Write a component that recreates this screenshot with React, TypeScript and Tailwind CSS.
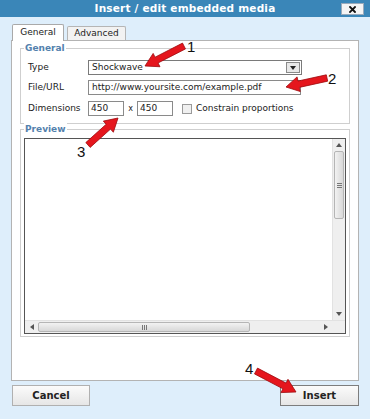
import React from 'react';

type Pt = [number, number];

// builds a fat arrow polygon from tail to tip
const arrowPoints = (tail: Pt, tip: Pt, shaft = 6.5, head = 15, headLen = 13) => {
  const dx = tip[0] - tail[0];
  const dy = tip[1] - tail[1];
  const len = Math.hypot(dx, dy);
  const ux = dx / len;
  const uy = dy / len;
  const nx = -uy;
  const ny = ux;
  const bx = tip[0] - ux * headLen;
  const by = tip[1] - uy * headLen;
  const pts: Pt[] = [
    [tail[0] + (nx * shaft) / 2, tail[1] + (ny * shaft) / 2],
    [bx + (nx * shaft) / 2, by + (ny * shaft) / 2],
    [bx + (nx * head) / 2, by + (ny * head) / 2],
    tip,
    [bx - (nx * head) / 2, by - (ny * head) / 2],
    [bx - (nx * shaft) / 2, by - (ny * shaft) / 2],
    [tail[0] - (nx * shaft) / 2, tail[1] - (ny * shaft) / 2],
  ];
  return pts.map((p) => p.join(',')).join(' ');
};

const arrows: { tail: Pt; tip: Pt; label: string; lx: number; ly: number }[] = [
  { tail: [184, 46], tip: [145, 66], label: '1', lx: 187, ly: 52 },
  { tail: [327, 78], tip: [286, 87], label: '2', lx: 328, ly: 84 },
  { tail: [88, 145], tip: [118, 118], label: '3', lx: 77, ly: 157 },
  { tail: [256, 371], tip: [296, 392], label: '4', lx: 245, ly: 374 },
];

const Legend = ({ text }: { text: string }) => (
  <span className="absolute -top-[7px] left-[3px] bg-white px-[1px] text-[9px] leading-[12px] font-bold text-[#5381ad]">
    {text}
  </span>
);

const App: React.FC = () => {
  return (
    <div
      className="relative w-[370px] h-[419px] bg-[#deeefb] flex flex-col overflow-hidden text-[#222]"
      style={{ fontFamily: '"DejaVu Sans", Verdana, sans-serif' }}
    >
      {/* Title bar */}
      <div className="relative h-[17px] bg-[#3a86b8] flex items-center justify-center">
        <span className="text-white font-bold text-[10.5px] leading-none tracking-[0.2px]">
          Insert / edit embedded media
        </span>
        <div className="absolute right-[6px] top-[3px] w-[23px] h-[12px] bg-[#f4f4f4] border border-[#9ab] flex items-center justify-center">
          <svg width="7" height="7" viewBox="0 0 7 7">
            <path d="M1 1 L6 6 M6 1 L1 6" stroke="#111" strokeWidth="1.8" strokeLinecap="square" />
          </svg>
        </div>
      </div>

      {/* Tabs */}
      <div className="flex items-end gap-[3px] pl-[12px] mt-[7px] h-[16px]">
        <div className="w-[52px] h-[17px] bg-white border border-b-0 border-[#a9a9a9] rounded-t-[2px] flex items-center justify-center text-[9px] relative top-[1px]">
          General
        </div>
        <div className="w-[59px] h-[14px] bg-[#f2f2f2] border border-b-0 border-[#b5b5b5] rounded-t-[2px] flex items-center justify-center text-[9px]">
          Advanced
        </div>
      </div>

      {/* Panel */}
      <div className="ml-[11px] w-[348px] h-[341px] bg-white border border-[#b3b3b3] px-[8px] pt-[7px] flex flex-col">
        {/* General fieldset */}
        <div className="relative h-[76px] border border-[#cfcfcf] pl-[7px] pt-[11px] flex flex-col gap-[5px] text-[9px]">
          <Legend text="General" />
          <div className="flex items-center h-[15px]">
            <span className="w-[60px]">Type</span>
            <div className="w-[214px] h-[15px] border border-[#7a7a7a] flex items-center pl-[3px] pr-[1px]">
              <span className="flex-1">Shockwave</span>
              <div className="w-[14px] h-[11px] border border-[#8a8a8a] bg-[#e8e8e8] flex items-center justify-center">
                <svg width="6" height="4" viewBox="0 0 6 4">
                  <polygon points="0,0 6,0 3,4" fill="#222" />
                </svg>
              </div>
            </div>
          </div>
          <div className="flex items-center h-[15px]">
            <span className="w-[60px]">File/URL</span>
            <div className="w-[213px] h-[15px] border border-[#8a8a8a] flex items-center pl-[3px]">
              http://www.yoursite.com/example.pdf
            </div>
          </div>
          <div className="flex items-center h-[15px] mt-[1px]">
            <span className="w-[60px]">Dimensions</span>
            <div className="w-[36px] h-[15px] border border-[#8a8a8a] flex items-center pl-[2px]">450</div>
            <span className="w-[13px] text-center text-[8px]">x</span>
            <div className="w-[36px] h-[15px] border border-[#8a8a8a] flex items-center pl-[2px]">450</div>
            <div className="ml-[9px] w-[10px] h-[10px] border border-[#9a9a9a] bg-[#f0f0f0]" />
            <span className="ml-[4px]">Constrain proportions</span>
          </div>
        </div>

        {/* Preview fieldset */}
        <div className="relative mt-[5px] h-[208px] border border-[#cfcfcf] px-[3px] pt-[8px]">
          <Legend text="Preview" />
          <div className="w-[322px] h-[196px] border border-[#555] bg-white flex flex-col">
            <div className="flex-1 flex">
              <div className="flex-1" />
              <div className="w-[13px] bg-[#efefef] flex flex-col border-l border-[#e2e2e2]">
                <div className="h-[12px] flex items-center justify-center">
                  <svg width="6" height="4" viewBox="0 0 6 4">
                    <polygon points="0,4 6,4 3,0" fill="#555" />
                  </svg>
                </div>
                <div className="h-[68px] mx-[1px] border border-[#b5b5b5] rounded-[2px] bg-gradient-to-r from-[#f2f2f2] to-[#d8d8d8] flex items-center justify-center">
                  <div className="flex flex-col gap-[1px]">
                    <div className="w-[5px] h-px bg-[#777]" />
                    <div className="w-[5px] h-px bg-[#777]" />
                    <div className="w-[5px] h-px bg-[#777]" />
                  </div>
                </div>
                <div className="flex-1" />
                <div className="h-[12px] flex items-center justify-center">
                  <svg width="6" height="4" viewBox="0 0 6 4">
                    <polygon points="0,0 6,0 3,4" fill="#555" />
                  </svg>
                </div>
              </div>
            </div>
            <div className="h-[13px] flex bg-[#efefef] border-t border-[#e2e2e2]">
              <div className="w-[13px] flex items-center justify-center">
                <svg width="4" height="6" viewBox="0 0 4 6">
                  <polygon points="4,0 4,6 0,3" fill="#555" />
                </svg>
              </div>
              <div className="w-[212px] my-[1px] border border-[#b5b5b5] rounded-[2px] bg-gradient-to-b from-[#f2f2f2] to-[#d8d8d8] flex items-center justify-center">
                <div className="flex gap-[1px]">
                  <div className="w-px h-[5px] bg-[#777]" />
                  <div className="w-px h-[5px] bg-[#777]" />
                  <div className="w-px h-[5px] bg-[#777]" />
                </div>
              </div>
              <div className="flex-1" />
              <div className="w-[13px] flex items-center justify-center">
                <svg width="4" height="6" viewBox="0 0 4 6">
                  <polygon points="0,0 0,6 4,3" fill="#555" />
                </svg>
              </div>
              <div className="w-[13px] bg-[#efefef]" />
            </div>
          </div>
        </div>
      </div>

      {/* Buttons */}
      <div className="flex justify-between px-[12px] mt-[4px] pr-[11px]">
        <button className="w-[78px] h-[21px] border border-[#b0b0b0] bg-gradient-to-b from-[#fbfbfb] to-[#e6e6e6] text-[10px] font-bold text-[#222]">
          Cancel
        </button>
        <button className="w-[79px] h-[21px] border border-[#7d7d7d] bg-gradient-to-b from-[#fbfbfb] to-[#e6e6e6] text-[10px] font-bold text-[#222]">
          Insert
        </button>
      </div>

      {/* Annotation arrows */}
      <svg className="absolute inset-0 pointer-events-none" width="370" height="419" viewBox="0 0 370 419">
        {arrows.map((a) => (
          <g key={a.label}>
            <polygon
              points={arrowPoints(a.tail, a.tip)}
              fill="#e5161d"
              stroke="#9c0a0e"
              strokeWidth="0.8"
              strokeLinejoin="round"
            />
            <text
              x={a.lx}
              y={a.ly}
              fontSize="15"
              fill="#111"
              style={{ fontFamily: '"Liberation Sans", Arial, sans-serif' }}
            >
              {a.label}
            </text>
          </g>
        ))}
      </svg>
    </div>
  );
};

export default App;
